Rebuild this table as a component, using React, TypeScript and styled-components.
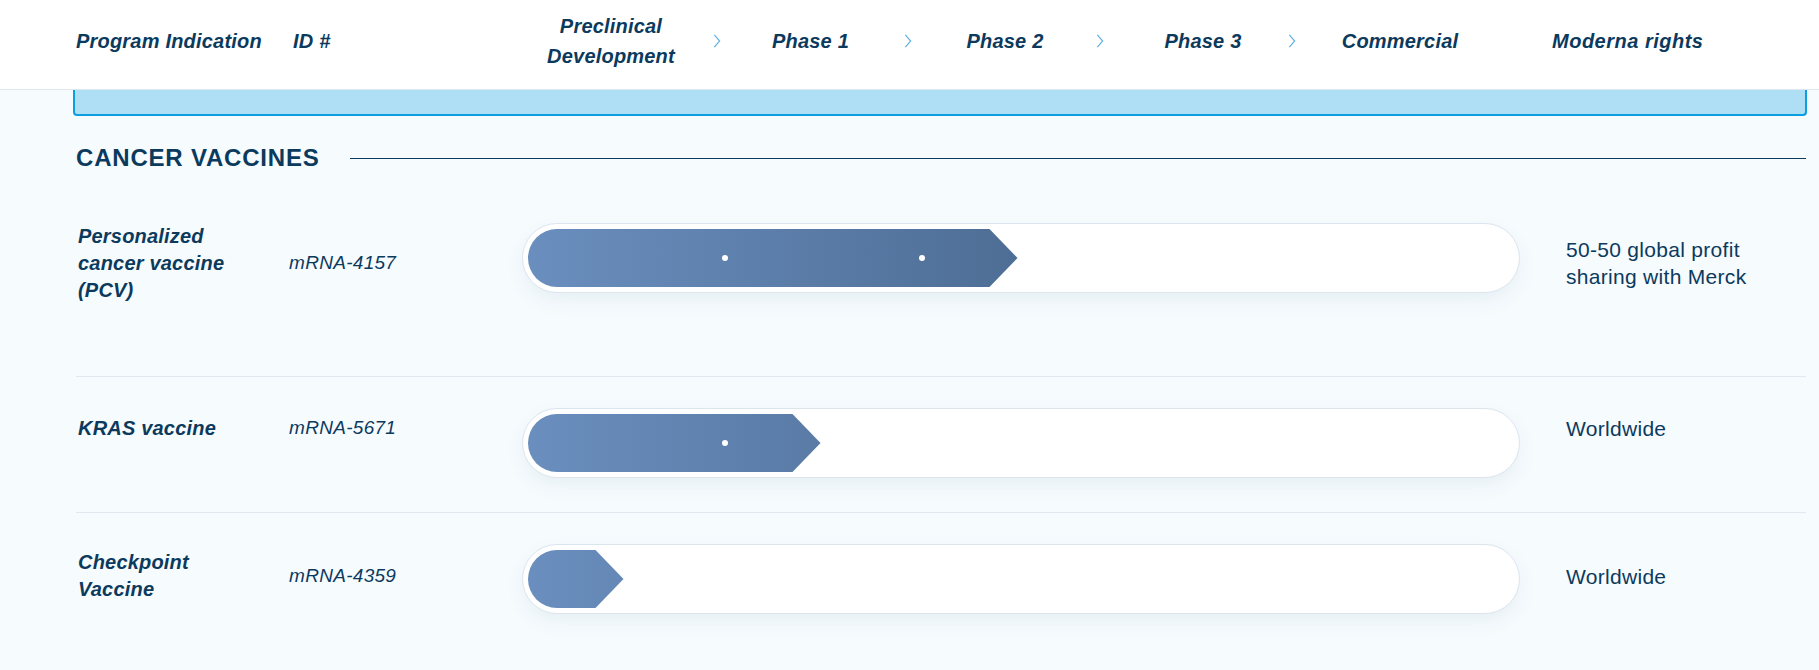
import React from 'react';
import styled, { createGlobalStyle } from 'styled-components';

interface Program {
  name: string;
  id: string;
  stage: number; // 0 = preclinical, 1 = phase 1, ...
  rights: string;
  tall?: boolean;
  top?: boolean;
  shift?: number;
}

const SEGMENT = 197;

const phases = [
  { label: 'Preclinical Development', pad: 0 },
  { label: 'Phase 1', pad: -4 },
  { label: 'Phase 2', pad: 2 },
  { label: 'Phase 3', pad: 14 },
  { label: 'Commercial', pad: 0 },
];

const programs: Program[] = [
  {
    name: 'Personalized cancer vaccine (PCV)',
    id: 'mRNA-4157',
    stage: 2,
    rights: '50-50 global profit sharing with Merck',
    tall: true,
    shift: 5,
  },
  { name: 'KRAS vaccine', id: 'mRNA-5671', stage: 1, rights: 'Worldwide', top: true },
  { name: 'Checkpoint Vaccine', id: 'mRNA-4359', stage: 0, rights: 'Worldwide', shift: -3 },
];

const Chevron = () => (
  <svg width="9" height="16" viewBox="0 0 9 16" fill="none">
    <polyline points="1.5,1 7.5,8 1.5,15" stroke="#5fb0e3" strokeWidth="1.3" />
  </svg>
);

const PipelineBar: React.FC<{ stage: number }> = ({ stage }) => {
  const width = SEGMENT * (stage + 0.5) - 3;
  const dots = Array.from({ length: stage }, (_, i) => SEGMENT * (i + 1) - 3);
  return (
    <Track>
      <Fill style={{ width }}>
        {dots.map((x) => (
          <Dot key={x} style={{ left: x }} />
        ))}
      </Fill>
    </Track>
  );
};

const App: React.FC = () => {
  return (
    <>
      <GlobalStyle />
      <Header>
        <HeadLabel $width={217}>Program Indication</HeadLabel>
        <HeadLabel $width={216}>ID #</HeadLabel>
        <PhaseGroup>
          {phases.map((p, i) => (
            <React.Fragment key={p.label}>
              <PhaseLabel $pad={p.pad}>
                {p.label === 'Preclinical Development' ? (
                  <>
                    Preclinical
                    <br />
                    Development
                  </>
                ) : (
                  p.label
                )}
              </PhaseLabel>
              {i < phases.length - 1 && (
                <ChevronCell>
                  <Chevron />
                </ChevronCell>
              )}
            </React.Fragment>
          ))}
        </PhaseGroup>
        <RightsHead $pad={0}>Moderna rights</RightsHead>
      </Header>

      <Content>
        <InfoBox />
        <SectionTitle>
          <TitleText>CANCER VACCINES</TitleText>
          <TitleRule />
        </SectionTitle>

        {programs.map((p) => (
          <Row key={p.id} $tall={p.tall} $top={p.top} $shift={p.shift ?? 0}>
            <ProgramName>{p.name}</ProgramName>
            <ProgramId>{p.id}</ProgramId>
            <PipelineBar stage={p.stage} />
            <Rights>{p.rights}</Rights>
          </Row>
        ))}
      </Content>
    </>
  );
};

const GlobalStyle = createGlobalStyle`
  html, body {
    margin: 0;
    padding: 0;
    background: #f6fbfe;
    overflow: hidden;
    font-family: "Liberation Sans", Arial, sans-serif;
    color: #0c3a5d;
  }
`;

const Header = styled.header`
  box-sizing: border-box;
  height: 90px;
  padding: 0 0 7px 76px;
  background: #ffffff;
  border-bottom: 1px solid #dfe7ee;
  display: flex;
  align-items: center;
`;

const HeadLabel = styled.div<{ $width: number }>`
  width: ${(p) => p.$width}px;
  flex-shrink: 0;
  font-size: 20px;
  font-weight: bold;
  font-style: italic;
  letter-spacing: 0.2px;
`;

const PhaseGroup = styled.div`
  display: grid;
  grid-template-columns: 204px 8px 183px 8px 184px 8px 184px 8px 208px;
  align-items: center;
`;

const PhaseLabel = styled.div<{ $pad: number }>`
  text-align: center;
  padding-left: ${(p) => Math.max(p.$pad, 0)}px;
  padding-right: ${(p) => Math.max(-p.$pad, 0)}px;
  font-size: 20px;
  font-weight: bold;
  font-style: italic;
  line-height: 30px;
  letter-spacing: 0.2px;
`;

const ChevronCell = styled.div`
  display: flex;
  justify-content: center;
  align-items: center;
  height: 30px;
`;

const RightsHead = styled(PhaseLabel)`
  margin-left: 48px;
  text-align: left;
  letter-spacing: 0.5px;
`;

const Content = styled.main`
  padding: 0 13px 0 76px;
`;

const InfoBox = styled.div`
  height: 24px;
  margin: 0 -1px 0 -3px;
  background: #aedff5;
  border: 2px solid #0c9fe0;
  border-top: none;
  border-radius: 0 0 4px 4px;
`;

const SectionTitle = styled.div`
  display: flex;
  align-items: center;
  gap: 30px;
  margin: 28px 0 19px;
`;

const TitleText = styled.h2`
  margin: 0;
  font-size: 24px;
  line-height: 28px;
  font-weight: bold;
  letter-spacing: 0.8px;
  white-space: nowrap;
`;

const TitleRule = styled.div`
  flex: 1;
  height: 1px;
  background: #0c3a5d;
`;

const Row = styled.div<{ $tall?: boolean; $top?: boolean; $shift: number }>`
  display: grid;
  grid-template-columns: 211px 233px 998px 1fr;
  grid-template-rows: 70px;
  padding: 32px 0 ${(p) => (p.$tall ? 83 : 34)}px 2px;

  & + & {
    border-top: 1px solid #e1e8ef;
    padding-top: 31px;
  }

  & > div:not(:nth-child(3)) {
    align-self: ${(p) => (p.$top ? 'start' : 'center')};
    margin-top: ${(p) => (p.$top ? 7 : p.$shift * 2)}px;
  }
`;

const ProgramName = styled.div`
  max-width: 160px;
  font-size: 20px;
  line-height: 27px;
  font-weight: bold;
  font-style: italic;
  letter-spacing: 0.2px;
`;

const ProgramId = styled.div`
  font-size: 19px;
  line-height: 26px;
  font-style: italic;
  letter-spacing: 0.3px;
`;

const Track = styled.div`
  box-sizing: border-box;
  height: 70px;
  padding: 5px;
  background: #ffffff;
  border: 1px solid #dbe5ee;
  border-radius: 36px;
  box-shadow: 0 8px 20px rgba(20, 60, 110, 0.06);
`;

const Fill = styled.div`
  position: relative;
  height: 58px;
  border-radius: 29px 0 0 29px;
  background: linear-gradient(90deg, #6a8ebe 0px, #4d6d94 500px);
  clip-path: polygon(0 0, calc(100% - 28px) 0, 100% 50%, calc(100% - 28px) 100%, 0 100%);
`;

const Dot = styled.span`
  position: absolute;
  top: 26px;
  width: 6px;
  height: 6px;
  border-radius: 50%;
  background: #ffffff;
`;

const Rights = styled.div`
  padding-left: 46px;
  max-width: 210px;
  font-size: 21px;
  line-height: 27px;
  letter-spacing: 0.3px;
`;

export default App;
